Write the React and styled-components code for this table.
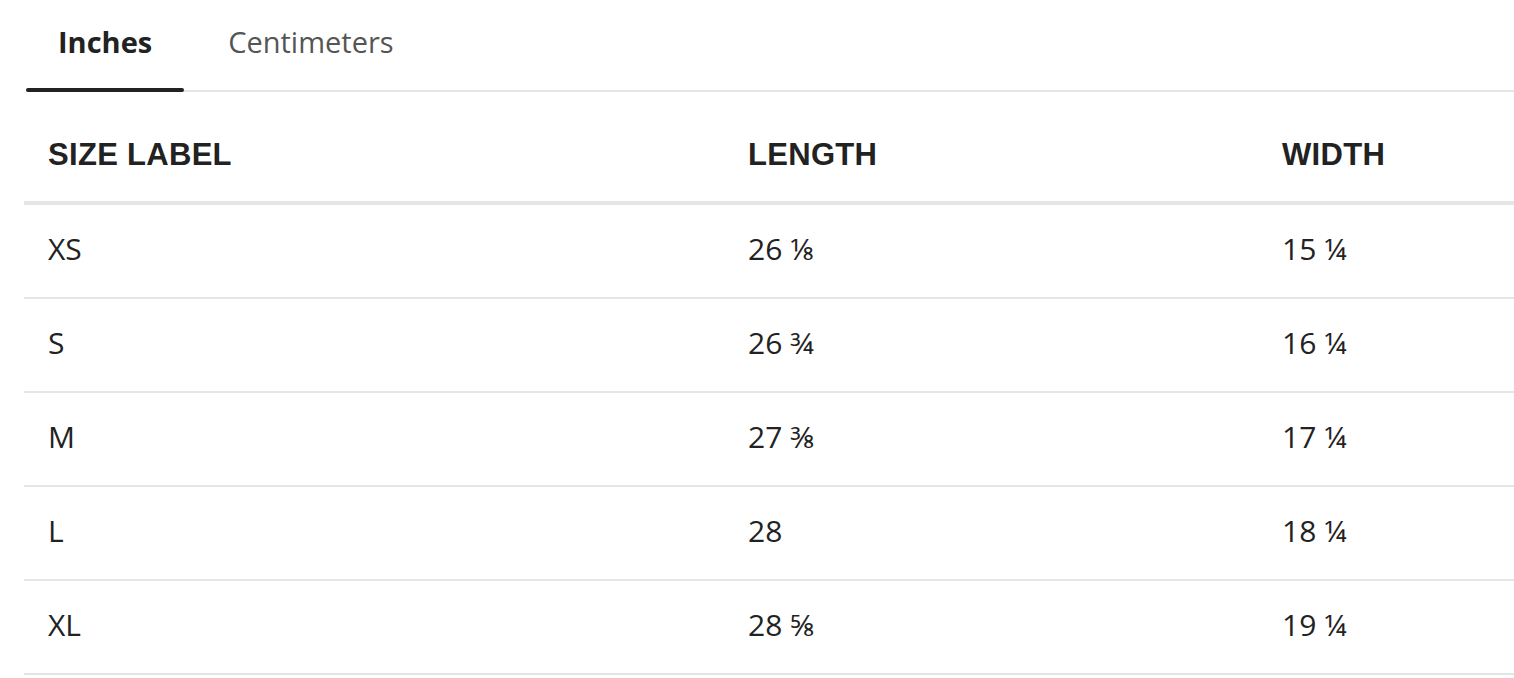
import React, { useState } from 'react';
import styled, { createGlobalStyle } from 'styled-components';

const GlobalStyle = createGlobalStyle`
  body {
    margin: 0;
    background: #ffffff;
    font-family: 'Open Sans', 'Liberation Sans', sans-serif;
    color: #222222;
  }
`;

const Page = styled.div`
  padding-left: 24px;
`;

const TabList = styled.div`
  display: flex;
  margin-left: 2px;
  border-bottom: 2px solid #e5e5e5;
`;

const Tab = styled.button`
  position: relative;
  background: none;
  border: none;
  padding: 22px 32px 28px;
  margin: 0 12px 0 0;
  font-family: 'Open Sans', 'Liberation Sans', sans-serif;
  font-size: 29px;
  line-height: 40px;
  font-weight: ${(p) => (p.active ? 700 : 400)};
  color: ${(p) => (p.active ? '#222222' : '#555555')};
  cursor: pointer;

  &::after {
    content: '';
    position: absolute;
    left: 0;
    right: 0;
    bottom: -2px;
    height: 4px;
    border-radius: 2px;
    background: ${(p) => (p.active ? '#222222' : 'transparent')};
  }
`;

const Table = styled.table`
  width: 100%;
  margin-top: 16px;
  border-collapse: collapse;
  table-layout: fixed;
`;

const HeadCell = styled.th`
  width: ${(p) => p.w || 'auto'};
  height: 93px;
  padding: 0 24px;
  text-align: left;
  vertical-align: middle;
  font-family: 'Liberation Sans', Arial, sans-serif;
  font-size: 31px;
  font-weight: 700;
  letter-spacing: 0.3px;
  color: #222222;
  border-bottom: 4px solid #e5e5e5;
`;

const Row = styled.tr`
  border-bottom: 2px solid #e5e5e5;
`;

const Cell = styled.td`
  height: 87px;
  padding: 0 24px 5px;
  vertical-align: middle;
  font-size: 30px;
  color: #222222;
`;

const Frac = styled.span`
  margin-left: 8px;
`;

const inchRows = [
  ['XS', '26', '⅛', '15', '¼'],
  ['S', '26', '¾', '16', '¼'],
  ['M', '27', '⅜', '17', '¼'],
  ['L', '28', '', '18', '¼'],
  ['XL', '28', '⅝', '19', '¼'],
];

const cmRows = [
  ['XS', '66.4', '', '38.7', ''],
  ['S', '67.9', '', '41.3', ''],
  ['M', '69.5', '', '43.8', ''],
  ['L', '71.1', '', '46.4', ''],
  ['XL', '72.7', '', '49', ''],
];

const Value = ({ whole, frac }) => (
  <>
    {whole}
    {frac && <Frac>{frac}</Frac>}
  </>
);

export default function App() {
  const [unit, setUnit] = useState('in');
  const rows = unit === 'in' ? inchRows : cmRows;

  return (
    <Page>
      <GlobalStyle />
      <TabList>
        <Tab active={unit === 'in'} onClick={() => setUnit('in')}>Inches</Tab>
        <Tab active={unit === 'cm'} onClick={() => setUnit('cm')}>Centimeters</Tab>
      </TabList>
      <Table>
        <thead>
          <tr>
            <HeadCell w="652px">SIZE LABEL</HeadCell>
            <HeadCell w="486px">LENGTH</HeadCell>
            <HeadCell>WIDTH</HeadCell>
          </tr>
        </thead>
        <tbody>
          {rows.map((r) => (
            <Row key={r[0]}>
              <Cell>{r[0]}</Cell>
              <Cell><Value whole={r[1]} frac={r[2]} /></Cell>
              <Cell><Value whole={r[3]} frac={r[4]} /></Cell>
            </Row>
          ))}
        </tbody>
      </Table>
    </Page>
  );
}
